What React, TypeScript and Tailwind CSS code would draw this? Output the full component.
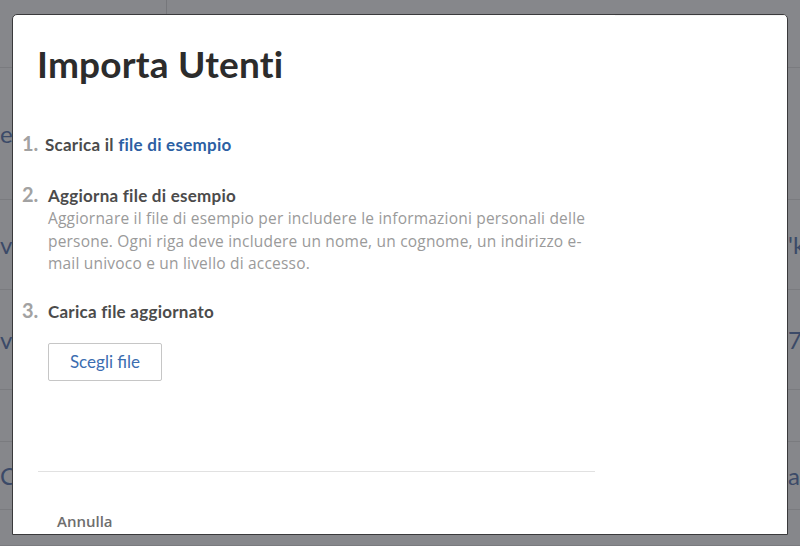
import React from "react";

const bgRows = [
  { h: 68, left: "", right: "" },
  { h: 132, left: "elenco", right: "" },
  { h: 90, left: "vista", right: "'k" },
  { h: 100, left: "vista", right: "7I" },
  { h: 52, left: "", right: "" },
  { h: 68, left: "Contatti", right: "a" },
  { h: 36, left: "", right: "" },
];

export default function App() {
  return (
    <div className="relative w-[800px] h-[546px] overflow-hidden bg-[#86878b]" style={{ fontFamily: "Lato, sans-serif" }}>
      {/* background page */}
      <div className="flex flex-col">
        {bgRows.map((r, i) => (
          <div
            key={i}
            className="flex items-center justify-between border-b border-[#7a7b7f] text-[24px] text-[#3b4a68]"
            style={{ height: r.h }}
          >
            <div className="flex h-full items-center">
              {i === 0 ? (
                <div className="ml-[166px] h-full border-l border-[#76777b]" />
              ) : (
                <span className="w-[12px] overflow-hidden whitespace-nowrap">{r.left}</span>
              )}
            </div>
            <span className="mr-[-4px] w-[16px] overflow-hidden whitespace-nowrap">{r.right}</span>
          </div>
        ))}
      </div>

      {/* modal */}
      <div className="absolute left-[12px] top-[14px] w-[776px] h-[521px] overflow-hidden rounded-t-[5px] border border-[#3a3a3c] bg-white">
        <div className="absolute right-0 top-[-1px] h-[2px] w-[172px] bg-[#f4f4f4]" />
        <h1 className="ml-[24px] mt-[25px] text-[37px] font-bold leading-[48px] tracking-[0.2px] text-[#2c2c2c]">
          Importa Utenti
        </h1>

        <ol className="ml-[9px] mt-[44px] flex w-[600px] flex-col">
          <li className="flex items-baseline">
            <span className="w-[23px] shrink-0 text-[20px] font-bold leading-[22px] text-[#a2a2a2]">1.</span>
            <span className="text-[17px] font-bold leading-[22px] tracking-[0.25px] text-[#4b4b4b]">
              Scarica il <span className="text-[#2d5fa3]">file di esempio</span>
            </span>
          </li>
          <li className="mt-[27px] flex items-baseline">
            <span className="w-[26px] shrink-0 text-[20px] font-bold leading-[22px] text-[#a2a2a2]">2.</span>
            <div className="flex w-[552px] flex-col">
              <span className="text-[17px] font-bold leading-[22px] tracking-[0.25px] text-[#4b4b4b]">Aggiorna file di esempio</span>
              <p
                className="text-[15.5px] leading-[22.5px] tracking-[0.2px] text-[#9a9a9a]"
                style={{ fontFamily: "'Open Sans', sans-serif" }}
              >
                Aggiornare il file di esempio per includere le informazioni personali delle persone. Ogni riga deve includere un nome, un cognome, un indirizzo e-mail univoco e un livello di accesso.
              </p>
            </div>
          </li>
          <li className="mt-[24px] flex items-baseline">
            <span className="w-[26px] shrink-0 text-[20px] font-bold leading-[22px] text-[#a2a2a2]">3.</span>
            <div className="flex flex-col">
              <span className="text-[17px] font-bold leading-[22px] tracking-[0.25px] text-[#4b4b4b]">Carica file aggiornato</span>
              <button className="mt-[20px] h-[38px] w-[114px] rounded-[2px] border border-[#c6c6c6] bg-white text-[17px] text-[#3b6db0]">
                Scegli file
              </button>
            </div>
          </li>
        </ol>

        <div className="ml-[25px] mt-[90px] h-px w-[557px] bg-[#e1e1e1]" />

        <div
          className="ml-[44px] mt-[39px] text-[15px] font-semibold leading-[20px] text-[#6e6e6e]"
          style={{ fontFamily: "'Open Sans', sans-serif" }}
        >
          Annulla
        </div>
      </div>
    </div>
  );
}
